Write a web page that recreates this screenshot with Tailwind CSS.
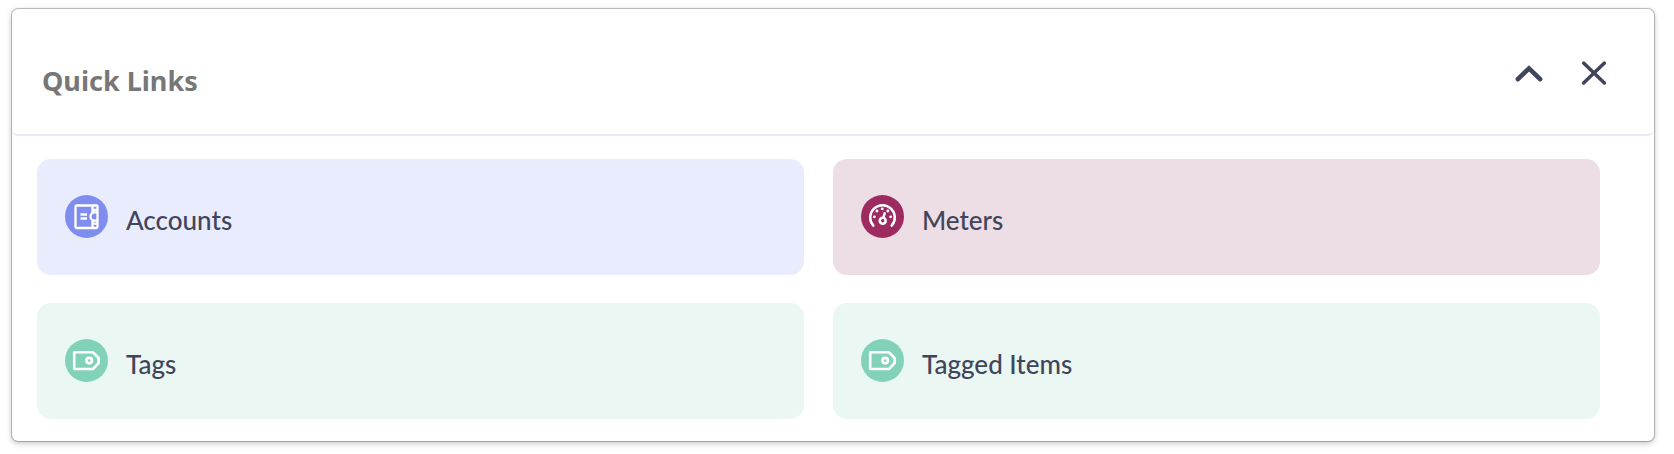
<!DOCTYPE html>
<html lang="en">
<head>
<meta charset="utf-8">
<meta name="viewport" content="width=device-width, initial-scale=1">
<title>Quick Links</title>
<script src="https://cdn.jsdelivr.net/npm/@tailwindcss/browser@4"></script>
</head>
<body class="bg-white text-[#41455c]">
<section class="mt-[9px] mr-5 mb-3 ml-3 rounded-md bg-white pb-[22px] shadow-[0_0_0_1px_rgba(0,0,0,0.18),0_2px_6px_rgba(0,0,0,0.25),0_0_2px_rgba(0,0,0,0.2)]">
  <header class="flex items-center justify-between rounded-b-md border-b-2 border-[#ebebf3] pt-11 pr-[42px] pb-[33px] pl-[30px]">
    <h2 class="pt-2 font-['Noto_Sans',sans-serif] text-[27px] leading-10 font-bold text-[#777777]">Quick Links</h2>
    <div class="flex gap-[29px] pb-2">
      <button type="button" aria-label="Collapse" class="size-9">
        <svg viewBox="0 0 36 36" class="size-9" fill="none" stroke="currentColor" stroke-width="4.6" stroke-linecap="round"><path d="M6.9 24.2 18 13.4 29.1 24.2"/></svg>
      </button>
      <button type="button" aria-label="Close" class="size-9">
        <svg viewBox="0 0 36 36" class="size-9" fill="none" stroke="currentColor" stroke-width="3.5" stroke-linecap="round"><path d="M7.6 8.1 28.4 28M28.4 8.1 7.6 28"/></svg>
      </button>
    </div>
  </header>
  <nav aria-label="Quick links" class="grid grid-cols-2 gap-x-[29px] gap-y-7 pt-[23px] pr-[54px] pl-[25px] font-[Lato,sans-serif] text-[26px] leading-8 font-medium">
    <a href="#accounts" class="flex h-29 items-center gap-[18px] rounded-[14px] bg-[#e9ecfc] px-7 pb-[2px]">
      <svg viewBox="0 0 43 43" class="size-[43px]" fill="none" stroke="#fff" stroke-width="2.3"><circle cx="21.5" cy="21.5" r="21.5" fill="#7f8eee" stroke="none"/><rect x="10.5" y="10.5" width="22" height="22.5" rx="1.2"/><path d="M27.5 10.5v7M27.5 26v7M27.5 14.8h5M27.5 28.7h5M32.5 17.3h-2.8a4.2 4.2 0 0 0 0 8.4h2.8M15.5 19.5h6.5M15.5 23.5h6.5"/></svg>
      <span class="pt-2">Accounts</span>
    </a>
    <a href="#meters" class="flex h-29 items-center gap-[18px] rounded-[14px] bg-[#eddde4] px-7 pb-[2px]">
      <svg viewBox="0 0 43 43" class="size-[43px]" fill="none" stroke="#fff" stroke-width="2.5" stroke-linecap="round"><circle cx="21.5" cy="21.5" r="21.5" fill="#9d2b60" stroke="none"/><path d="M12.3 30.7A12.3 12.3 0 1 1 30.7 30.7"/><circle cx="21.7" cy="25.7" r="3" stroke-width="2.5"/><path d="M22.5 22.6 23.6 18.2"/><path stroke-width="2.8" d="M13.3 21.8h.1M15.9 16h.1M21.2 13.8h.1M26.8 16h.1M29.6 21.8h.1"/></svg>
      <span class="pt-2">Meters</span>
    </a>
    <a href="#tags" class="flex h-29 items-center gap-[18px] rounded-[14px] bg-[#eaf7f3] px-7 pb-[2px]">
      <svg viewBox="0 0 43 43" class="size-[43px]" fill="none" stroke="#fff" stroke-width="2.6" stroke-linejoin="round"><circle cx="21.5" cy="21.5" r="21.5" fill="#82d2b9" stroke="none"/><path d="M9.2 13.3H28l5.6 5.7v5.2L28 30H9.2Z"/><circle cx="24.2" cy="21.6" r="2.7" stroke-width="2.7"/></svg>
      <span class="pt-2">Tags</span>
    </a>
    <a href="#tagged-items" class="flex h-29 items-center gap-[18px] rounded-[14px] bg-[#eaf7f3] px-7 pb-[2px]">
      <svg viewBox="0 0 43 43" class="size-[43px]" fill="none" stroke="#fff" stroke-width="2.6" stroke-linejoin="round"><circle cx="21.5" cy="21.5" r="21.5" fill="#82d2b9" stroke="none"/><path d="M9.2 13.3H28l5.6 5.7v5.2L28 30H9.2Z"/><circle cx="24.2" cy="21.6" r="2.7" stroke-width="2.7"/></svg>
      <span class="pt-2">Tagged Items</span>
    </a>
  </nav>
</section>
</body>
</html>
